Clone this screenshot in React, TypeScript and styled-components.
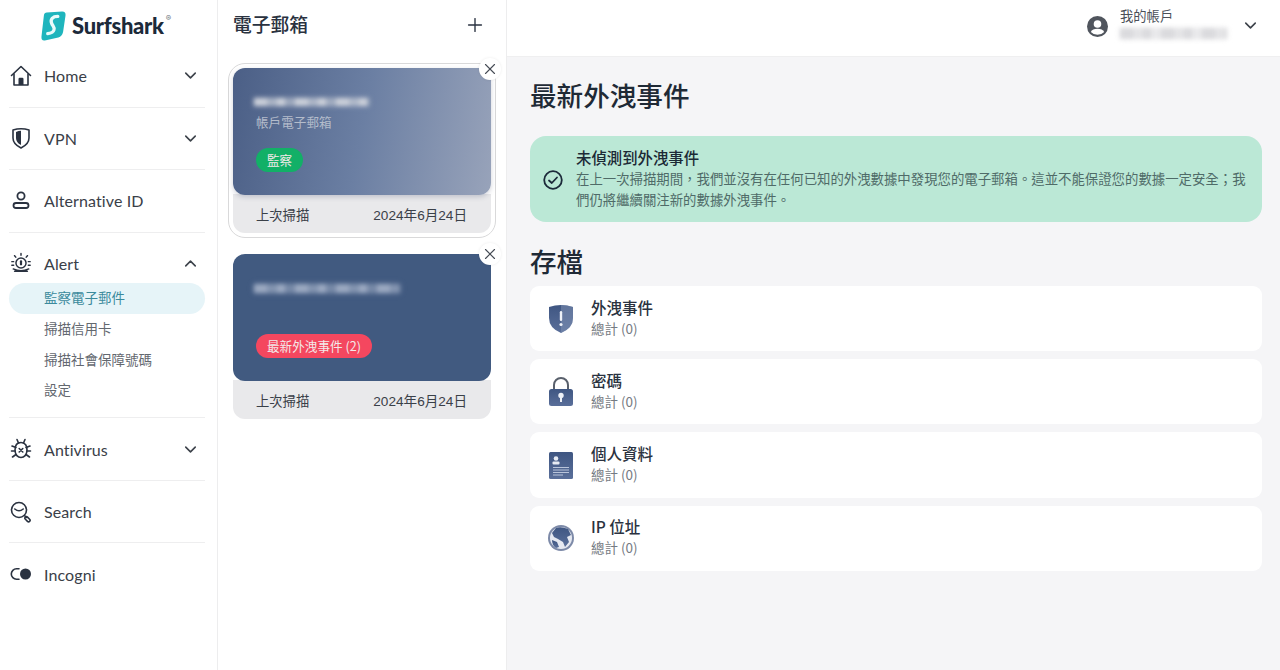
import React from "react";
import styled, { createGlobalStyle } from "styled-components";
import { ChevronDown, ChevronUp, Plus, X } from "lucide-react";

const cjk = `"Noto Sans CJK TC", "Noto Sans CJK SC", sans-serif`;
const stack = `Lato, "Noto Sans CJK TC", "Noto Sans CJK SC", sans-serif`;

const Global = createGlobalStyle`
  html, body { margin: 0; padding: 0; height: 100%; background: #fff; }
  body { font-family: ${stack}; color: #2a3240; overflow: hidden; }
  * { box-sizing: border-box; }
`;

const Page = styled.div`
  display: grid;
  grid-template-columns: 218px 289px 1fr;
  width: 1280px;
  height: 670px;
`;

const Sidebar = styled.aside`
  display: flex;
  flex-direction: column;
  background: #fff;
  border-right: 1px solid #ededee;
  padding: 0 12px 0 9px;
`;

const LogoRow = styled.div`
  height: 45px;
  flex: none;
  display: flex;
  align-items: center;
  gap: 6px;
  padding: 6px 0 0 32px;
`;

const LogoText = styled.span`
  font-family: Lato, sans-serif;
  font-weight: 900;
  font-size: 22px;
  letter-spacing: -0.3px;
  color: #1c2a3a;
`;

const LogoMark = styled.sup`
  font-size: 8px;
  color: #6c7580;
  position: relative;
  top: -8px;
  left: -4px;
  line-height: 1;
  font-family: "Inter", sans-serif;
`;

const NavSection = styled.section<{ $last?: boolean }>`
  flex: none;
  border-bottom: ${(p) => (p.$last ? "none" : "1px solid #eeeeef")};
`;

const NavHead = styled.div`
  height: 61.5px;
  display: flex;
  align-items: center;
  padding-left: 1px;
  padding-right: 5px;
  font-size: 16px;
  color: #3a4048;
  letter-spacing: 0.1px;
`;

const NavIcon = styled.span`
  width: 22px;
  height: 22px;
  display: flex;
  align-items: center;
  justify-content: center;
  margin-right: 12px;
  color: #2a3240;
`;

const NavLabel = styled.span`
  flex: 1;
`;

const SubList = styled.div`
  display: flex;
  flex-direction: column;
  margin-top: -11px;
  padding-bottom: 11.7px;
`;

const SubItem = styled.div<{ $active?: boolean }>`
  height: 30.7px;
  display: flex;
  align-items: center;
  padding: 0 0 2px 35px;
  font-family: ${cjk};
  font-size: 13.5px;
  border-radius: 16px;
  color: ${(p) => (p.$active ? "#3b8a9c" : "#63686f")};
  background: ${(p) => (p.$active ? "#e6f4f8" : "transparent")};
`;

const Panel = styled.section`
  background: #fff;
  border-right: 1px solid #ededee;
  padding: 0 15px;
  display: flex;
  flex-direction: column;
`;

const PanelHead = styled.div`
  height: 48px;
  display: flex;
  align-items: center;
  justify-content: space-between;
  padding-right: 5px;
  margin-bottom: 20px;
  color: #2a3240;
`;

const PanelTitle = styled.h2`
  margin: 0;
  font-family: ${cjk};
  font-size: 18.8px;
  line-height: 1;
  font-weight: 500;
`;

const PlusIcon = styled(Plus)`
  margin-top: 2px;
`;

const CardOuter = styled.div<{ $selected?: boolean }>`
  position: relative;
  width: 258px;
  margin-bottom: 21px;
  ${(p) =>
    p.$selected
      ? `outline: 1.5px solid #d9d9da; outline-offset: 4px; border-radius: 12px;`
      : ``}
`;

const CardTop = styled.div<{ $faded?: boolean }>`
  height: 127px;
  border-radius: 12px;
  padding: 30px 21px 0;
  display: flex;
  flex-direction: column;
  align-items: flex-start;
  background: ${(p) =>
    p.$faded
      ? "linear-gradient(100deg, #4b5f86 0%, #6b7fa3 50%, #98a3ba 100%)"
      : "#415a80"};
  box-shadow: ${(p) => (p.$faded ? "0 2px 5px rgba(70,80,110,.25)" : "none")};
  position: relative;
`;

const Blur = styled.div<{ $w: number; $h?: number; $tone?: string }>`
  width: ${(p) => p.$w}px;
  height: ${(p) => p.$h ?? 9}px;
  background: repeating-linear-gradient(
    90deg,
    ${(p) => p.$tone ?? "#c5cad4"} 0 13px,
    ${(p) => p.$tone ?? "#c5cad4"}bb 13px 23px,
    ${(p) => p.$tone ?? "#c5cad4"} 23px 31px,
    ${(p) => p.$tone ?? "#c5cad4"}99 31px 41px
  );
  filter: blur(2.2px);
  box-shadow: 0 0 5px ${(p) => p.$tone ?? "#c5cad4"}66;
`;

const CardSub = styled.div`
  font-family: ${cjk};
  font-size: 12.6px;
  margin: 6px 0 0 2px;
  color: #b4bccb;
`;

const Badge = styled.span<{ $tone: string }>`
  position: absolute;
  left: 23px;
  top: 79.500px;
  height: 24.500px;
  padding: 0 11px 1px;
  display: inline-flex;
  align-items: center;
  border-radius: 13px;
  font-family: ${cjk};
  font-size: 12.6px;
  color: #f3e9e9;
  background: ${(p) => p.$tone};
`;

const CardFoot = styled.div`
  height: 39px;
  background: #e9e9eb;
  margin-top: -1px;
  padding: 1px 24px 0 23px;
  border-radius: 0 0 12px 12px;
  display: flex;
  align-items: center;
  justify-content: space-between;
  font-family: ${cjk};
  font-size: 13.3px;
  color: #3a4048;
`;

const FootDate = styled.span`
  font-family: "Liberation Sans", ${cjk};
  font-size: 13.6px;
`;

const CloseBtn = styled.span<{ $low?: boolean }>`
  position: absolute;
  top: ${(p) => (p.$low ? "-10px" : "-11px")};
  right: -10px;
  width: 22px;
  height: 22px;
  border-radius: 50%;
  background: #fff;
  color: #454b54;
  display: flex;
  align-items: center;
  justify-content: center;
  box-shadow: 0 0 3px rgba(0, 0, 0, 0.08);
`;

const Main = styled.main`
  background: #f5f5f7;
  display: flex;
  flex-direction: column;
  min-width: 0;
`;

const TopBar = styled.header`
  height: 57px;
  flex: none;
  background: #fff;
  border-bottom: 1px solid #efeff0;
  display: flex;
  justify-content: flex-end;
  align-items: center;
  padding: 0 20px 11px 0;
  color: #4b5058;
`;

const AccountIcon = styled.span`
  display: flex;
  margin-right: 12px;
  margin-top: 8px;
`;

const AccountText = styled.div`
  width: 116px;
  display: flex;
  flex-direction: column;
  gap: 3px;
  font-family: ${cjk};
  font-size: 13.3px;
  line-height: 18px;
`;

const ChevronWrap = styled.span`
  display: flex;
  margin-left: 5px;
  margin-top: 6px;
  color: #3c424a;
`;

const Content = styled.div`
  padding: 18px 18px 0 23px;
  display: flex;
  flex-direction: column;
`;

const H1 = styled.h1`
  margin: 0;
  font-family: ${cjk};
  font-size: 26.6px;
  line-height: 40px;
  font-weight: 500;
  color: #1f2a36;
`;

const Notice = styled.div`
  margin-top: 21px;
  height: 86px;
  background: #bbe8d6;
  border-radius: 16px;
  display: flex;
  align-items: center;
  padding: 0 14px 0 13px;
  gap: 13px;
`;

const NoticeIcon = styled.span`
  display: flex;
  flex: none;
  margin-top: 1px;
  color: #1c2a3a;
`;

const NoticeBody = styled.div`
  font-family: ${cjk};
  font-size: 13.4px;
  line-height: 21px;
  color: #4f6b68;
  padding-bottom: 2px;
`;

const NoticeTitle = styled.div`
  font-size: 15.4px;
  line-height: 22px;
  font-weight: 500;
  color: #1c2a36;
`;

const H2 = styled.h2`
  margin: 19px 0 5px;
  font-family: ${cjk};
  font-size: 26.6px;
  line-height: 40px;
  font-weight: 500;
  color: #1f2a36;
`;

const Rows = styled.div`
  display: flex;
  flex-direction: column;
  gap: 8px;
`;

const Row = styled.div`
  height: 65.2px;
  background: #fff;
  border-radius: 9px;
  display: flex;
  align-items: center;
  padding-left: 16px;
`;

const RowIcon = styled.span`
  width: 30px;
  height: 30px;
  margin-right: 15px;
  display: flex;
  align-items: center;
  justify-content: center;
`;

const RowText = styled.div`
  margin-top: -4px;
`;

const RowTitle = styled.div`
  font-family: ${cjk};
  font-size: 15.5px;
  line-height: 22px;
  font-weight: 500;
  color: #2a3240;
`;

const RowSub = styled.div`
  font-family: ${cjk};
  font-size: 13.5px;
  line-height: 20px;
  color: #757a82;
`;

const Logo = () => (
  <svg width="25" height="32" viewBox="0 0 26 32" aria-hidden>
    <path d="M6 2 L22 1 Q26 1 25.500 5 L23 22 Q22 27 18 28 L4 31 Q0 31.500 0.500 27 L3 5 Q3.500 2 6 2Z" fill="#1fb5bd" />
    <path d="M17.500 6 C12 6 9.500 9 11 13 C12 16 14.500 17 13.500 20 C12.800 22.500 10 23.500 7 24" fill="none" stroke="#e9fafa" strokeWidth="3.400" strokeLinecap="round" />
  </svg>
);

const s = { fill: "none", stroke: "currentColor", strokeWidth: 1.6, strokeLinecap: "round", strokeLinejoin: "round" } as const;

const HomeIcon = () => (
  <svg width="22" height="22" viewBox="0 0 22 22" aria-hidden>
    <path {...s} d="M1.500 10.500 L11 1.500 L20.500 10.500" />
    <path {...s} d="M4 9 V20 H18 V9" />
    <path d="M8.500 20 V14 Q8.500 12.800 9.700 12.800 H12.300 Q13.500 12.800 13.500 14 V20Z" fill="currentColor" />
  </svg>
);
const ShieldIcon = () => (
  <svg width="22" height="22" viewBox="0 0 22 22" aria-hidden>
    <path {...s} d="M3 3 Q11 0.500 19 3 V11 Q19 17 11 21 Q3 17 3 11Z" />
    <path d="M6 5 Q8.500 3.800 11 3.800 V18 Q6 15.500 6 11Z" fill="currentColor" />
  </svg>
);
const PersonIcon = () => (
  <svg width="22" height="22" viewBox="0 0 22 22" aria-hidden>
    <circle {...s} strokeWidth={1.8} cx="11" cy="6" r="3.600" />
    <rect {...s} strokeWidth={1.8} x="3.500" y="13" width="15" height="5" rx="2.500" />
  </svg>
);
const AlertIcon = () => (
  <svg width="24" height="24" viewBox="0 0 24 24" aria-hidden>
    <path {...s} d="M12 1.500v2M5 4l1.300 1.600M19 4l-1.300 1.600M2 10.500h2M20 10.500h2M2 14.500h2M20 14.500h2" />
    <circle {...s} cx="12" cy="12" r="5.500" />
    <rect x="10.800" y="9" width="2.400" height="5.500" rx="1" fill="currentColor" />
    <path {...s} d="M3.500 18.500 Q12 22.500 20.500 18.500 M5 21 H19" />
  </svg>
);
const BugIcon = () => (
  <svg width="22" height="22" viewBox="0 0 22 22" aria-hidden>
    <path {...s} d="M7 1.500 L8.500 5 M15 1.500 L13.500 5 M2 8 L6 9.500 M20 8 L16 9.500 M1.500 13 H5 M20.500 13 H17 M2.500 19 L6 16.500 M19.500 19 L16 16.500" />
    <path {...s} d="M11 4.500 C6.500 4.500 5 8 5 12 C5 17 8 19.500 11 19.500 C14 19.500 17 17 17 12 C17 8 15.500 4.500 11 4.500Z" />
    <path {...s} d="M9.200 10.500 L12.800 14 M12.800 10.500 L9.200 14" />
  </svg>
);
const SearchIcon = () => (
  <svg width="22" height="22" viewBox="0 0 22 22" aria-hidden>
    <circle {...s} cx="9" cy="9" r="7.500" />
    <path {...s} d="M4.800 8 Q9 11.500 13.200 8" />
    <path {...s} d="M14.500 14.500 L16.500 16.500" />
    <rect {...s} x="16" y="15.200" width="3" height="6" rx="1.500" transform="rotate(-45 17.500 18.200)" />
  </svg>
);
const ToggleIcon = () => (
  <svg width="22" height="22" viewBox="0 0 22 22" aria-hidden>
    <path {...s} d="M9 5.800 H6.500 A5.200 5.200 0 0 0 6.500 16.200 H9" />
    <circle cx="15.500" cy="11" r="5.500" fill="currentColor" />
  </svg>
);
const CheckCircle = () => (
  <svg width="20" height="20" viewBox="0 0 20 20" aria-hidden>
    <circle cx="10" cy="10" r="8.800" fill="none" stroke="currentColor" strokeWidth="1.800" />
    <path d="M6 10.500 L8.800 13 L14 7.500" fill="none" stroke="currentColor" strokeWidth="1.800" strokeLinecap="round" strokeLinejoin="round" />
  </svg>
);
const AccountGlyph = () => (
  <svg width="21" height="21" viewBox="0 0 21 21" aria-hidden>
    <circle cx="10.500" cy="10.500" r="10.500" fill="#50555d" />
    <circle cx="10.500" cy="8" r="3.800" fill="#fff" />
    <path d="M3.800 16 Q5.500 12.700 10.500 12.700 Q15.500 12.700 17.200 16 Q14.800 18.700 10.500 18.700 Q6.200 18.700 3.800 16Z" fill="#fff" />
  </svg>
);

const Grad = ({ id }: { id: string }) => (
  <defs>
    <linearGradient id={id} x1="0" y1="0" x2="0" y2="1">
      <stop offset="0" stopColor="#3f5682" />
      <stop offset="1" stopColor="#5a6f9a" />
    </linearGradient>
  </defs>
);

const BreachIcon = () => (
  <svg width="26" height="30" viewBox="0 0 26 30" aria-hidden>
    <Grad id="g1" />
    <path d="M1 3 Q13 -1 25 3 V14 Q25 24 13 29 Q1 24 1 14Z" fill="url(#g1)" />
    <path d="M13 1 Q19 1 25 3 V14 Q25 24 13 29Z" fill="#7d8fb2" opacity=".55" />
    <rect x="11.800" y="7" width="2.400" height="10" rx="1.200" fill="#eef1f7" />
    <circle cx="13" cy="20.500" r="1.600" fill="#eef1f7" />
  </svg>
);
const LockIcon = () => (
  <svg width="26" height="30" viewBox="0 0 26 30" aria-hidden>
    <Grad id="g2" />
    <path d="M6 13 V8 A7 7 0 0 1 20 8 V13" fill="none" stroke="#59606c" strokeWidth="2" />
    <rect x="1" y="12" width="24" height="17" rx="2.500" fill="url(#g2)" />
    <circle cx="13" cy="18.500" r="2.700" fill="#eef1f7" />
    <rect x="12" y="19" width="2" height="6" fill="#eef1f7" />
  </svg>
);
const IdIcon = () => (
  <svg width="26" height="30" viewBox="0 0 26 30" aria-hidden>
    <Grad id="g3" />
    <rect x="1" y="2" width="24" height="27" rx="1.500" fill="url(#g3)" />
    <circle cx="8" cy="8.500" r="2.300" fill="#e8ecf4" />
    <rect x="4.500" y="11.500" width="7" height="3" rx="1" fill="#e8ecf4" />
    <path d="M5 17.500h16M5 20h16M5 22.500h16M5 25h10" stroke="#b9c4da" strokeWidth="1" />
  </svg>
);
const GlobeIcon = () => (
  <svg width="28" height="28" viewBox="0 0 28 28" aria-hidden>
    <Grad id="g4" />
    <circle cx="14" cy="14" r="13" fill="#7d8aa8" />
    <circle cx="14" cy="14" r="11" fill="#e6e9f1" />
    <path d="M9 4 Q14 2 21 5 L24 11 L20 13 L22 18 L18 23 L16 18 L11 15 L7 13 L5 9 Z" fill="url(#g4)" />
    <path d="M5 16 L10 18 L12 23 L9 24 Q5 21 5 16Z" fill="url(#g4)" />
  </svg>
);

const NavItem = ({ icon, label, chevron, last }: { icon: React.ReactNode; label: string; chevron?: boolean; last?: boolean }) => (
  <NavSection $last={last}>
    <NavHead>
      <NavIcon>{icon}</NavIcon>
      <NavLabel>{label}</NavLabel>
      {chevron && <ChevronDown size={19} strokeWidth={2} color="#3c424a" />}
    </NavHead>
  </NavSection>
);

const Card = ({ faded, sub, badge, tone, blurW }: { faded?: boolean; sub?: string; badge: string; tone: string; blurW: number }) => (
  <CardOuter $selected={faded}>
    <CardTop $faded={faded}>
      <Blur $w={blurW} $h={faded ? 8 : 9} $tone={faded ? "#c9ced8" : "#9aa8c0"} />
      {sub && <CardSub>{sub}</CardSub>}
      <Badge $tone={tone}>{badge}</Badge>
    </CardTop>
    <CardFoot>
      <span>上次掃描</span>
      <FootDate>2024年6月24日</FootDate>
    </CardFoot>
    <CloseBtn $low={faded}>
      <X size={18} strokeWidth={1.5} />
    </CloseBtn>
  </CardOuter>
);

const rows = [
  { title: "外洩事件", icon: <BreachIcon /> },
  { title: "密碼", icon: <LockIcon /> },
  { title: "個人資料", icon: <IdIcon /> },
  { title: "IP 位址", icon: <GlobeIcon /> },
];

export default function App() {
  return (
    <Page>
      <Global />
      <Sidebar>
        <LogoRow>
          <Logo />
          <LogoText>Surfshark</LogoText>
          <LogoMark>®</LogoMark>
        </LogoRow>
        <NavItem icon={<HomeIcon />} label="Home" chevron />
        <NavItem icon={<ShieldIcon />} label="VPN" chevron />
        <NavItem icon={<PersonIcon />} label="Alternative ID" />
        <NavSection>
          <NavHead>
            <NavIcon><AlertIcon /></NavIcon>
            <NavLabel>Alert</NavLabel>
            <ChevronUp size={19} strokeWidth={2} color="#3c424a" />
          </NavHead>
          <SubList>
            <SubItem $active>監察電子郵件</SubItem>
            <SubItem>掃描信用卡</SubItem>
            <SubItem>掃描社會保障號碼</SubItem>
            <SubItem>設定</SubItem>
          </SubList>
        </NavSection>
        <NavItem icon={<BugIcon />} label="Antivirus" chevron />
        <NavItem icon={<SearchIcon />} label="Search" />
        <NavItem icon={<ToggleIcon />} label="Incogni" last />
      </Sidebar>

      <Panel>
        <PanelHead>
          <PanelTitle>電子郵箱</PanelTitle>
          <PlusIcon size={22} strokeWidth={1.5} />
        </PanelHead>
        <Card faded sub="帳戶電子郵箱" badge="監察" tone="#12b067" blurW={115} />
        <Card badge="最新外洩事件 (2)" tone="#f4475f" blurW={146} />
      </Panel>

      <Main>
        <TopBar>
          <AccountIcon><AccountGlyph /></AccountIcon>
          <AccountText>
            我的帳戶
            <Blur $w={107} $h={11} $tone="#dadadd" />
          </AccountText>
          <ChevronWrap><ChevronDown size={19} strokeWidth={2} /></ChevronWrap>
        </TopBar>
        <Content>
          <H1>最新外洩事件</H1>
          <Notice>
            <NoticeIcon><CheckCircle /></NoticeIcon>
            <NoticeBody>
              <NoticeTitle>未偵測到外洩事件</NoticeTitle>
              在上一次掃描期間，我們並沒有在任何已知的外洩數據中發現您的電子郵箱。這並不能保證您的數據一定安全；我們仍將繼續關注新的數據外洩事件。
            </NoticeBody>
          </Notice>
          <H2>存檔</H2>
          <Rows>
            {rows.map((r) => (
              <Row key={r.title}>
                <RowIcon>{r.icon}</RowIcon>
                <RowText>
                  <RowTitle>{r.title}</RowTitle>
                  <RowSub>總計 (0)</RowSub>
                </RowText>
              </Row>
            ))}
          </Rows>
        </Content>
      </Main>
    </Page>
  );
}
